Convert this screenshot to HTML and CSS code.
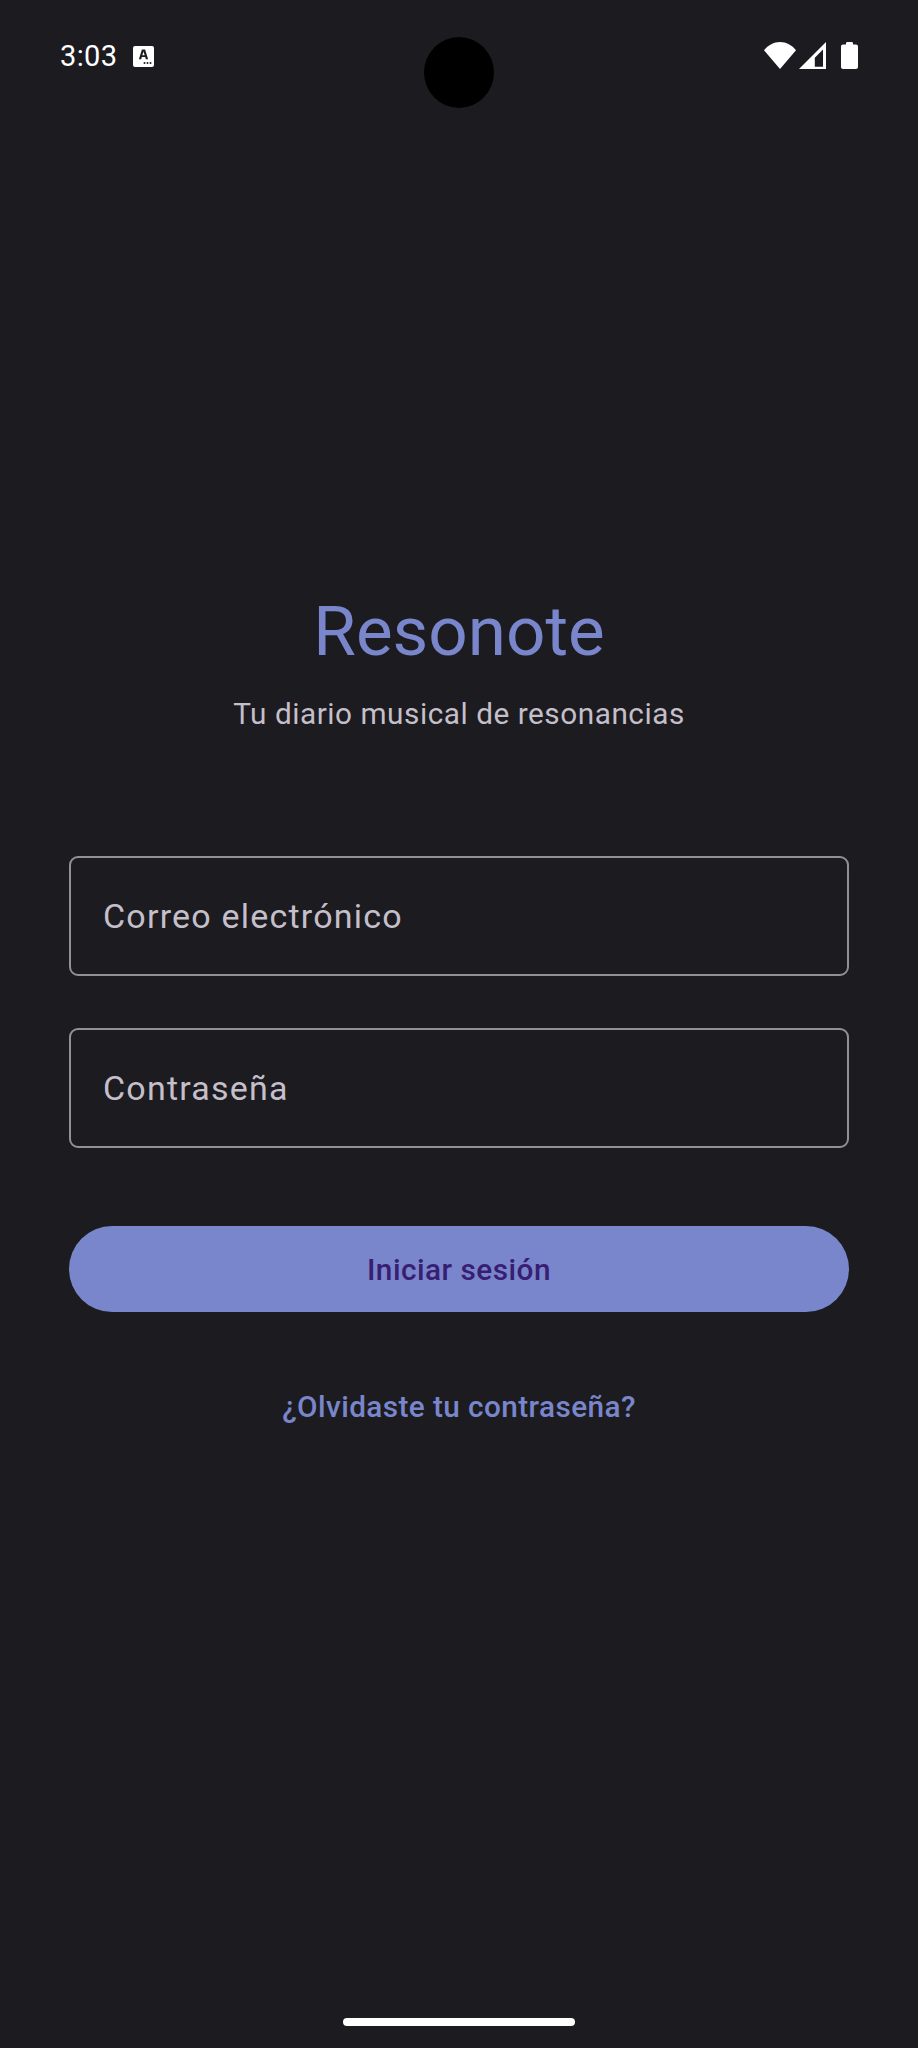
FILE: index.html
```html
<!DOCTYPE html>
<html lang="es">
<head>
<meta charset="utf-8">
<title>Resonote</title>
<link rel="stylesheet" href="styles.css">
</head>
<body>
<div class="screen">
  <header class="status">
    <div class="status-left">
      <span class="time">3:03</span>
      <svg class="a-icon" width="21" height="21" viewBox="0 0 21 21"><rect width="21" height="21" rx="2" fill="#fff"/><path d="M8.9 3.6h3.2l3 9.6h-2.3l-.6-2.1H8.8l-.6 2.1H5.900zM9.300 9.300h2.400l-1.200-3.900z" fill="#1c1b1f" fill-rule="evenodd"/><circle cx="11.500" cy="17" r="1" fill="#1c1b1f"/><circle cx="14.500" cy="17" r="1" fill="#1c1b1f"/><circle cx="17.500" cy="17" r="1" fill="#1c1b1f"/></svg>
    </div>
    <div class="status-right">
      <svg width="32" height="27" viewBox="0 0 32 27"><path d="M0 8.200C4 3.200 9.800 0 16 0s12 3.200 16 8.200L16 27z" fill="#fff"/></svg>
      <svg class="signal" width="27" height="27" viewBox="0 0 27 27"><path d="M27 0v27H0zM24 7.500 15.800 15.700v9H24z" fill="#fff" fill-rule="evenodd"/></svg>
      <svg class="battery" width="17" height="27" viewBox="0 0 17 27"><path d="M5 2.500V1.300C5 .6 5.600 0 6.300 0h4.400c.7 0 1.300.6 1.300 1.300v1.200h3c1.100 0 2 .9 2 2V25c0 1.100-.9 2-2 2H2c-1.100 0-2-.9-2-2V4.500c0-1.100.9-2 2-2z" fill="#fff"/></svg>
    </div>
  </header>
  <div class="camera"></div>
  <main class="login">
    <h1 class="title">Resonote</h1>
    <p class="subtitle">Tu diario musical de resonancias</p>
    <div class="field first">Correo electrónico</div>
    <div class="field second">Contraseña</div>
    <button class="primary">Iniciar sesión</button>
    <a class="link">¿Olvidaste tu contraseña?</a>
  </main>
  <div class="home"></div>
</div>
</body>
</html>
```
FILE: styles.css
```css
html, body {
  margin: 0;
  padding: 0;
  background: #1c1b1f;
}
.screen {
  position: relative;
  width: 918px;
  height: 2048px;
  overflow: hidden;
  display: flex;
  flex-direction: column;
  font-family: Roboto, "Liberation Sans", sans-serif;
  background: #1c1b1f;
}
.status {
  height: 110px;
  flex: none;
  display: flex;
  justify-content: space-between;
  align-items: flex-start;
  padding: 42px 60px 0 60px;
  box-sizing: border-box;
  color: #fff;
}
.status-left {
  display: flex;
  align-items: center;
  gap: 15px;
}
.time {
  font-size: 29px;
  line-height: 28px;
  letter-spacing: .4px;
}
.a-icon {
  display: block;
}
.status-right {
  display: flex;
  align-items: flex-start;
  gap: 3px;
}
.status-right svg {
  display: block;
}
.battery {
  margin-left: 12px;
}
.camera {
  position: absolute;
  left: 424px;
  top: 37px;
  width: 70px;
  height: 71px;
  border-radius: 50%;
  background: #000;
}
.login {
  flex: none;
  padding: 0 69px;
  display: flex;
  flex-direction: column;
  align-items: stretch;
  text-align: center;
}
.title {
  margin: 482px 0 0;
  font-size: 69.2px;
  line-height: 80px;
  font-weight: 400;
  color: #7986cb;
}
.subtitle {
  margin: 22px 0 0;
  font-size: 29.75px;
  line-height: 40px;
  letter-spacing: .53px;
  color: #c4bfca;
}
.field {
  box-sizing: border-box;
  height: 120px;
  border: 2.5px solid #938f99;
  border-radius: 9px;
  padding: 0 32px;
  display: flex;
  align-items: center;
  font-size: 34px;
  letter-spacing: 1.2px;
  color: #c4bfca;
}
.first {
  margin-top: 122px;
}
.second {
  margin-top: 52px;
}
.primary {
  margin-top: 78px;
  height: 86px;
  border: 0;
  border-radius: 43px;
  background: #7986cb;
  color: #381e72;
  font-family: inherit;
  font-size: 29.75px;
  font-weight: 500;
  letter-spacing: .49px;
}
.link {
  margin-top: 75px;
  font-size: 29.75px;
  line-height: 40px;
  font-weight: 500;
  letter-spacing: .41px;
  color: #7986cb;
}
.home {
  position: absolute;
  left: 343px;
  top: 2018px;
  width: 232px;
  height: 8px;
  border-radius: 4px;
  background: #fff;
}
```
